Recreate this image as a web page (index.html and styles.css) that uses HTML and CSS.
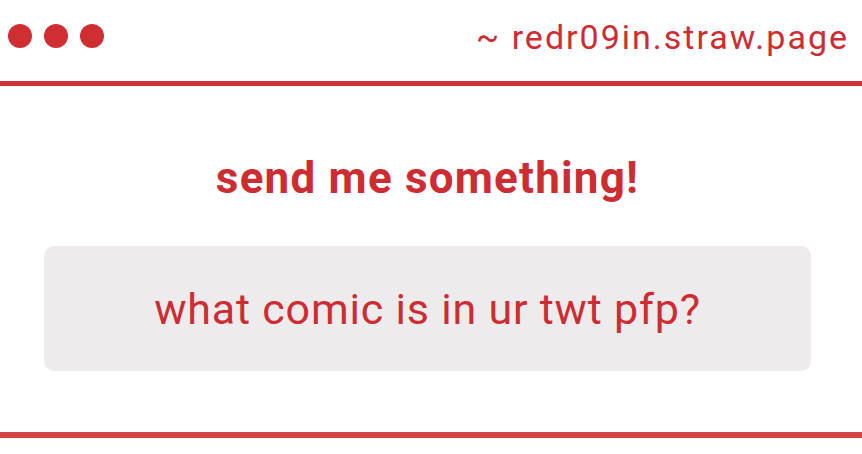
FILE: index.html
```html
<!DOCTYPE html>
<html lang="en">
<head>
    <meta charset="UTF-8">
    <title>straw.page</title>
    <link rel="stylesheet" href="styles.css">
</head>
<body>
<div class="window">
    <div class="bar">
        <div class="dots">
            <span></span>
            <span></span>
            <span></span>
        </div>
        <div class="url">~ redr09in.straw.page</div>
    </div>
    <div class="content">
        <h1 class="title">send me something!</h1>
        <div class="question">what comic is in ur twt pfp?</div>
    </div>
</div>
</body>
</html>
```

FILE: styles.css
```css
@charset "UTF-8";
/* reset */
body,h1,p,div{margin:0;padding:0}
body{font-family:Roboto,"Liberation Sans",sans-serif;color:#cd2c32;background:#fff;}

.window{
    width:862px;
    height:454px;
}
.bar{
    height:86px;
    display:flex;
    align-items:center;
    justify-content:space-between;
    padding:0 13px 0 8px;
    border-bottom:5px solid #cf3536;
    box-sizing:border-box;
}
.dots{
    display:flex;
    gap:12px;
    margin-top:-10px;
}
.dots span{
    width:24px;
    height:24px;
    border-radius:50%;
    background:#cf2e32;
}
.url{
    font-size:34px;
    line-height:38px;
    letter-spacing:2px;
    margin-top:-8px;
}
.content{
    height:352px;
    box-sizing:border-box;
    border-bottom:6px solid #d04545;
    padding:66px 51px 0 44px;
}
.title{
    font-size:44px;
    font-weight:700;
    letter-spacing:1.2px;
    text-align:center;
    line-height:52px;
}
.question{
    margin-top:42px;
    height:125px;
    background:#edebec;
    border-radius:10px;
    display:flex;
    align-items:center;
    justify-content:center;
    font-size:43px;
    letter-spacing:0.8px;
}
```
